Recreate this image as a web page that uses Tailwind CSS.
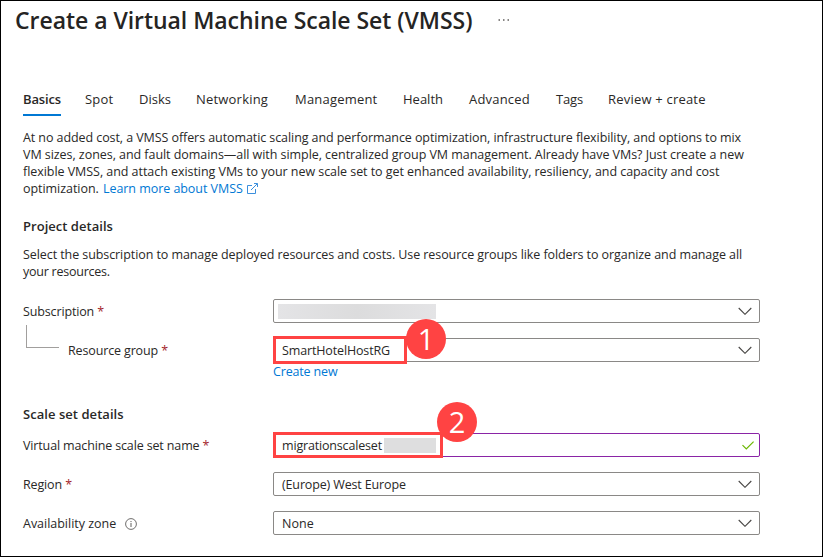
<!DOCTYPE html>
<html lang="en">
<head>
<meta charset="utf-8">
<title>Create a Virtual Machine Scale Set (VMSS)</title>
<script src="https://cdn.jsdelivr.net/npm/@tailwindcss/browser@4"></script>
</head>
<body class="bg-white">
<svg class="hidden">
  <symbol id="chevron" viewBox="0 0 14 8"><path d="M.7 1 7 7.3 13.3 1" fill="none" stroke="#484644" stroke-width="1.1"/></symbol>
</svg>
<main class="h-[557px] w-[823px] overflow-hidden border border-black bg-white pl-[22px] font-['Open_Sans','Noto_Sans',sans-serif] text-[12.5px] leading-[17px] tracking-[-0.14px] text-[#292827]">
  <header class="-ml-2 flex h-[37px] items-center">
    <h1 class="whitespace-nowrap text-[23px] leading-[32px] font-semibold tracking-[-0.04px] text-[#252423]">Create a Virtual Machine Scale Set (VMSS)</h1>
    <svg class="ml-[26px] h-[2px] w-[12px]" viewBox="0 0 12 2" fill="#605e5c"><path d="M.5.3h1.5v1.5H.5zM5 .3h1.5v1.5H5zM9.5.3H11v1.5H9.5z"/></svg>
  </header>

  <nav class="mt-[49px] flex h-[29px] text-[13px] leading-[24px] tracking-[0.2px] whitespace-nowrap">
    <div class="w-[62px]"><span class="block h-full w-[38px] border-b-2 border-[#0078d4] font-semibold tracking-[-0.14px]">Basics</span></div>
    <span class="w-[54px]">Spot</span>
    <span class="w-[57px] tracking-[0.03px]">Disks</span>
    <span class="w-[99px]">Networking</span>
    <span class="w-[108px]">Management</span>
    <span class="w-[66px] tracking-normal">Health</span>
    <span class="w-[87px]">Advanced</span>
    <span class="w-[52px] tracking-[-0.15px]">Tags</span>
    <span>Review + create</span>
  </nav>

  <p class="mt-[13px] whitespace-nowrap tracking-[-0.05px]"><span class="tracking-[-0.079px]">At no added cost, a VMSS offers automatic scaling and performance optimization, infrastructure flexibility, and options to mix</span><br>VM sizes, zones, and fault domains—all with simple, centralized group VM management. Already have VMs? Just create a new<br>flexible VMSS, and attach existing VMs to your new scale set to get enhanced availability, resiliency, and capacity and cost<br>optimization. <a class="ml-px text-[#0078d4]">Learn more about VMSS<svg class="ml-[4px] inline-block h-[11px] w-[11px] align-[-1px]" viewBox="0 0 11 11" fill="none" stroke="#3c8fdd"><path d="M5 2.5H.5v8h8V6M4 7l6.3-6.3M7 .5h3.5V4"/></svg></a></p>

  <h2 class="mt-[21px] text-[13px] font-semibold tracking-[0.03px]">Project details</h2>
  <p class="mt-[11px] whitespace-nowrap tracking-[-0.079px]">Select the subscription to manage deployed resources and costs. Use resource groups like folders to organize and manage all<br><span class="tracking-[-0.24px]">your resources.</span></p>

  <section class="mt-[19px] grid w-[737px] grid-cols-[250px_487px] gap-y-[15px]">
    <label class="h-6 pt-px leading-[24px]">Subscription <span class="text-[#a4262c]">*</span></label>
    <div class="flex h-6 items-center justify-between rounded-[2px] border border-[#8a8886] pr-[7px] pl-1">
      <span class="h-[15px] w-[158px] bg-linear-to-r from-[#e4e4e6] via-[#dcdcdd] to-[#e4e4e6]"></span>
      <svg class="h-2 w-[14px]"><use href="#chevron"/></svg>
    </div>
    <div class="flex">
      <span class="-mt-[13px] ml-[3px] h-[23px] w-[33px] border-b border-l border-[#a19f9d]"></span>
      <label class="ml-[9px] h-6 pt-px leading-[24px]">Resource group <span class="text-[#a4262c]">*</span></label>
    </div>
    <div>
      <div class="relative flex h-6 items-center justify-between rounded-[2px] border border-[#8a8886] pr-[7px] pl-2">
        <span>SmartHotelHostRG</span>
        <svg class="h-2 w-[14px]"><use href="#chevron"/></svg>
        <span class="absolute -top-[3px] -left-px h-7 w-[134px] border-3 border-[#ff4343]"></span>
        <span class="absolute -top-5 left-[132px] h-10 w-10 rounded-full bg-[#ff4343] text-center text-[29px] leading-[40px] font-medium tracking-normal text-white">1</span>
      </div>
      <a class="block pt-px tracking-[-0.16px] text-[#0078d4]">Create new</a>
    </div>
  </section>

  <h2 class="mt-[26px] text-[13px] font-semibold tracking-[0.05px]">Scale set details</h2>
  <section class="mt-[10px] grid w-[737px] grid-cols-[250px_487px] gap-y-[15px]">
    <label class="h-6 pt-px leading-[24px]">Virtual machine scale set name <span class="text-[#a4262c]">*</span></label>
    <div class="relative flex h-6 items-center rounded-[2px] border border-[#8a24a6] pr-[5px] pl-2">
      <span class="tracking-[-0.17px]">migrationscaleset</span>
      <span class="ml-[2px] h-[15px] w-[52px] bg-[#dededf]"></span>
      <svg class="ml-auto h-[9px] w-[12px]" viewBox="0 0 12 9" fill="none" stroke="#6bb700" stroke-width="1.2"><path d="M.5 4.2 4.3 8 11.6.6"/></svg>
      <span class="absolute -top-[2px] -left-px h-[26px] w-[170px] border-3 border-[#ff4343]"></span>
      <span class="absolute -top-8 left-[163px] h-10 w-10 rounded-full bg-[#ff4343] text-center text-[29px] leading-[40px] font-medium tracking-normal text-white">2</span>
    </div>
    <label class="h-6 pt-px leading-[24px]">Region <span class="text-[#a4262c]">*</span></label>
    <div class="flex h-6 items-center justify-between rounded-[2px] border border-[#8a8886] pr-[7px] pl-2">
      <span>(Europe) West Europe</span>
      <svg class="h-2 w-[14px]"><use href="#chevron"/></svg>
    </div>
    <label class="flex items-center pt-px tracking-[-0.02px]">Availability zone
      <svg class="ml-[9px] h-3 w-3" viewBox="0 0 12 12" fill="none" stroke="#605e5c"><circle cx="6" cy="6" r="5.4" stroke-width=".9"/><path d="M6 5v4M6 3v1.1"/></svg>
    </label>
    <div class="flex h-6 items-center justify-between rounded-[2px] border border-[#8a8886] pr-[7px] pl-2">
      <span class="tracking-[0.09px]">None</span>
      <svg class="h-2 w-[14px]"><use href="#chevron"/></svg>
    </div>
  </section>
</main>
</body>
</html>
